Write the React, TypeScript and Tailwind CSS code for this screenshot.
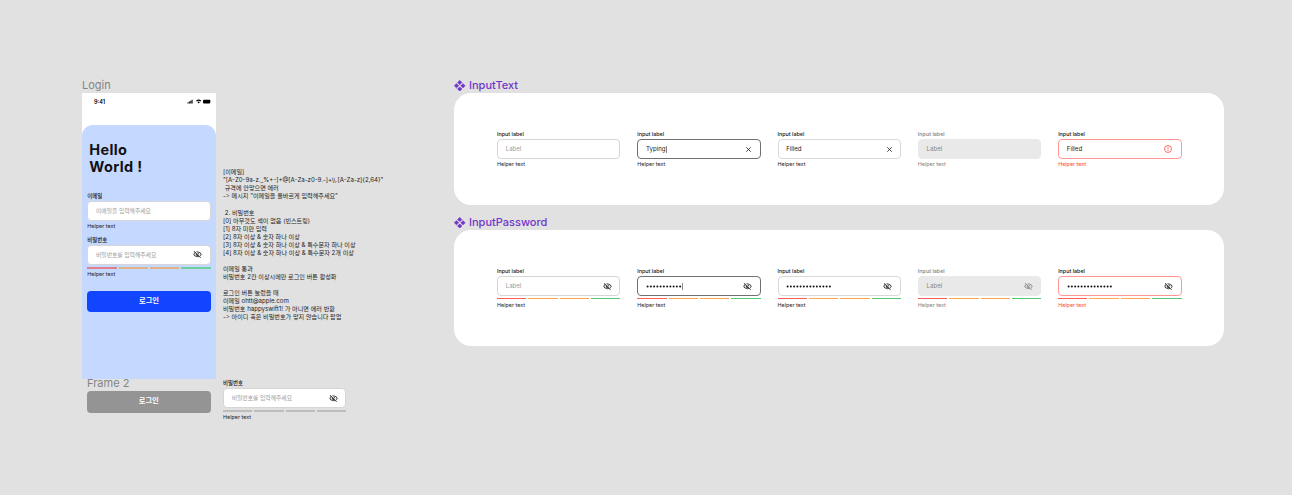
import React from "react";
import { MdOutlineVisibilityOff } from "react-icons/md";

type State = "empty" | "typing" | "filled" | "disabled" | "error";

const states: State[] = ["empty", "typing", "filled", "disabled", "error"];

const borders: Record<State, string> = {
  empty: "border-[#d6d6d6] bg-white",
  typing: "border-[#707070] bg-white",
  filled: "border-[#d9d9d9] bg-white",
  disabled: "border-[#e9e9e9] bg-[#e9e9e9]",
  error: "border-[#ff9692] bg-white",
};

function CloseIcon() {
  return (
    <svg className="mr-[0.5px] size-[5px]" viewBox="0 0 5 5" fill="none" stroke="#222" strokeWidth="0.85">
      <path d="M0.3 0.3 4.7 4.7M4.7 0.3 0.3 4.7" />
    </svg>
  );
}

function AlertIcon() {
  return (
    <svg className="mr-[0.6px] size-[8px]" viewBox="0 0 8 8" fill="none" stroke="#ff4a44" strokeWidth="0.8">
      <circle cx="4" cy="4" r="3.5" />
      <path d="M4 1.9v2.6M4 5.1v0.9" />
    </svg>
  );
}

function Strength({ tone = "solid" }: { tone?: "solid" | "soft" | "gray" }) {
  const palette = {
    solid: ["bg-[#ff5b57]", "bg-[#ffa64a]", "bg-[#ffa64a]", "bg-[#55c878]"],
    soft: ["bg-[#e0808f]", "bg-[#e0b183]", "bg-[#e0b183]", "bg-[#6fcf9d]"],
    gray: ["bg-[#bdbdbd]", "bg-[#bdbdbd]", "bg-[#bdbdbd]", "bg-[#bdbdbd]"],
  }[tone];
  const height = tone === "solid" ? "h-[1.2px]" : "h-[2px]";
  return (
    <div className="mt-[2px] flex h-[2.2px] items-start gap-[2px]">
      {palette.map((color, i) => (
        <div key={i} className={`flex-1 ${height} ${color}`} />
      ))}
    </div>
  );
}

interface FieldProps {
  label: string;
  value: React.ReactNode;
  state?: State;
  icon?: React.ReactNode;
  strength?: "solid" | "soft" | "gray";
  korean?: boolean;
}

function Field({ label, value, state = "empty", icon, strength, korean = false }: FieldProps) {
  const muted = state === "disabled";
  const valueColor = state === "empty" ? "text-[#9b9b9b]" : muted ? "text-[#858585]" : "text-[#222]";
  return (
    <div className="w-[123.4px]">
      <div className={`h-[8px] text-[5.4px] leading-[7px] font-medium whitespace-nowrap ${muted ? "text-[#808080]" : "text-[#111]"}`}>
        {label}
      </div>
      <div className={`flex h-[20px] items-center rounded-[4px] border px-[7.7px] ${borders[state]}`}>
        <span className={`flex-1 leading-[8px] whitespace-nowrap ${korean ? "text-[5.8px]" : "text-[6.1px]"} ${valueColor}`}>{value}</span>
        {icon}
      </div>
      {strength && <Strength tone={strength} />}
      <div
        className={`mt-[2px] text-[5.4px] leading-[7px] whitespace-nowrap ${
          state === "error" ? "text-[#ff4540]" : muted ? "text-[#808080]" : "text-[#222]"
        }`}
      >
        Helper text
      </div>
    </div>
  );
}

function Caret() {
  return <span className="inline-block h-[7px] w-px bg-[#858585] align-middle" />;
}

function Dots({ count }: { count: number }) {
  return (
    <svg className="inline-block h-[3px] align-middle" width={count * 3.25} height="3" fill="#111">
      {Array.from({ length: count }, (_, i) => (
        <circle key={i} cx={1.6 + i * 3.25} cy="1.5" r="1" />
      ))}
    </svg>
  );
}

function Eye({ muted = false }: { muted?: boolean }) {
  return <MdOutlineVisibilityOff className={`size-[9px] ${muted ? "text-[#858585]" : "text-[#222]"}`} />;
}

function textField(state: State) {
  const value = { empty: "Label", typing: <>Typing<Caret /></>, filled: "Filled", disabled: "Label", error: "Filled" }[state];
  const icon = state === "error" ? <AlertIcon /> : state === "typing" || state === "filled" ? <CloseIcon /> : null;
  return <Field key={state} label="Input label" value={value} state={state} icon={icon} />;
}

function passwordField(state: State) {
  const value = {
    empty: "Label",
    typing: <><Dots count={11} /><Caret /></>,
    filled: <Dots count={14} />,
    disabled: "Label",
    error: <Dots count={14} />,
  }[state];
  return (
    <Field key={state} label="Input label" value={value} state={state} icon={<Eye muted={state === "disabled"} />} strength="solid" />
  );
}

function ComponentSet({ title, className, children }: { title: string; className: string; children: React.ReactNode }) {
  return (
    <section>
      <h2 className="flex h-[15px] items-center gap-[3.5px] text-[11px] leading-[15px] font-medium text-[#7135cc]">
        <svg className="size-[11.5px]" viewBox="0 0 11 11" fill="currentColor" stroke="currentColor" strokeWidth="0.7" strokeLinejoin="round">
          <path d="M5.5 0.4 7.5 2.4 5.5 4.4 3.5 2.4zM5.5 6.6 7.5 8.6 5.5 10.6 3.5 8.6zM2.4 3.5 4.4 5.5 2.4 7.5 0.4 5.5zM8.6 3.5 10.6 5.5 8.6 7.5 6.6 5.5z" />
        </svg>
        {title}
      </h2>
      <div className={`flex w-[770px] gap-[16.9px] rounded-[17px] bg-white pl-[43px] ${className}`}>{children}</div>
    </section>
  );
}

function StatusBar() {
  return (
    <div className="flex h-[17px] items-center justify-between pr-[5.2px] pl-[12px]">
      <span className="text-[5.5px] leading-[8px] font-semibold text-black">9:41</span>
      <svg className="h-[5px] w-[24px]" viewBox="0 0 24 5">
        <path d="M0.5 3.2h1v1.3h-1zM1.9 2.6h1v1.9h-1zM3.3 1.7h1v2.8h-1zM4.6 0.8h1v3.7h-1z" />
        <path d="M9 1.7Q11.7 -0.5 14.3 1.7L13.5 2.5Q11.7 1.1 9.8 2.5zM10.4 3Q11.7 2.1 12.9 3L11.7 4.5z" />
        <rect x="16" y="0.7" width="7.3" height="3.7" rx="0.8" />
      </svg>
    </div>
  );
}

function LoginScreen() {
  return (
    <div className="h-[286px] w-[134px] bg-white">
      <StatusBar />
      <div className="mt-[15px] h-[254px] rounded-t-[11px] bg-[#c5d8ff] px-[5.3px] pt-[17px]">
        <h1 className="pl-[2px] text-[14.5px] leading-[16.5px] font-bold tracking-[0.35px] text-[#111]">
          Hello
          <br />
          World !
        </h1>
        <div className="mt-[17.6px]">
          <Field label="이메일" value="이메일을 입력해주세요" korean />
        </div>
        <div className="mt-[7px]">
          <Field label="비밀번호" value="비밀번호를 입력해주세요" icon={<Eye />} strength="soft" korean />
        </div>
        <button className="mt-[13px] block h-[21.5px] w-[123.4px] rounded-[4px] bg-[#1245ff] text-[7.3px] font-semibold text-white">로그인</button>
      </div>
    </div>
  );
}

const notes = [
  "[이메일]",
  '"[A-Z0-9a-z._%+-]+@[A-Za-z0-9.-]+\\\\.[A-Za-z]{2,64}"',
  " 규격에 안맞으면 에러",
  '-> 메시지 "이메일을 올바르게 입력해주세요"',
  "",
  " 2. 비밀번호",
  "[0] 아무것도 섹이 없음 (빈스트링)",
  "[1] 8자 미만 입력",
  "[2] 8자 이상 & 숫자 하나 이상",
  "[3] 8자 이상 & 숫자 하나 이상 & 특수문자 하나 이상",
  "[4] 8자 이상 & 숫자 하나 이상 & 특수문자 2개 이상",
  "",
  "이메일 통과",
  "비밀번호 2칸 이상시에만 로그인 버튼 활성화",
  "",
  "로그인 버튼 눌렀을 때",
  "이메일 ohtt@apple.com",
  "비밀번호 happyswift1! 가 아니면 에러 반환",
  "-> 아이디 혹은 비밀번호가 맞지 않습니다 팝업",
];

export default function App() {
  return (
    <main className="relative h-[495px] w-[1292px] overflow-hidden bg-[#e1e1e1] font-['Inter','Noto_Sans_CJK_KR',sans-serif]">
      <div className="absolute top-[78px] left-[82px]">
        <div className="h-[15px] text-[11px] leading-[15px] text-[#858585]">Login</div>
        <LoginScreen />
      </div>
      <div className="absolute top-[376px] left-[87px]">
        <div className="h-[15px] text-[11px] leading-[15px] text-[#858585]">Frame 2</div>
        <button className="block h-[21.5px] w-[123.5px] rounded-[4px] bg-[#949494] text-[7.3px] font-semibold text-white">로그인</button>
      </div>
      <div className="absolute top-[168.3px] left-[223px] text-[6.12px] leading-[8.06px] whitespace-pre text-[#1c1c1c]">
        {notes.map((line, i) => (
          <div key={i} className="h-[8.06px]">{line}</div>
        ))}
      </div>
      <div className="absolute top-[380px] left-[223px]">
        <Field label="비밀번호" value="비밀번호를 입력해주세요" icon={<Eye />} strength="gray" korean />
      </div>
      <div className="absolute top-[78px] left-[454px] flex flex-col gap-[10px]">
        <ComponentSet title="InputText" className="h-[112px] pt-[38px]">{states.map(textField)}</ComponentSet>
        <ComponentSet title="InputPassword" className="h-[116px] pt-[38px]">{states.map(passwordField)}</ComponentSet>
      </div>
    </main>
  );
}
